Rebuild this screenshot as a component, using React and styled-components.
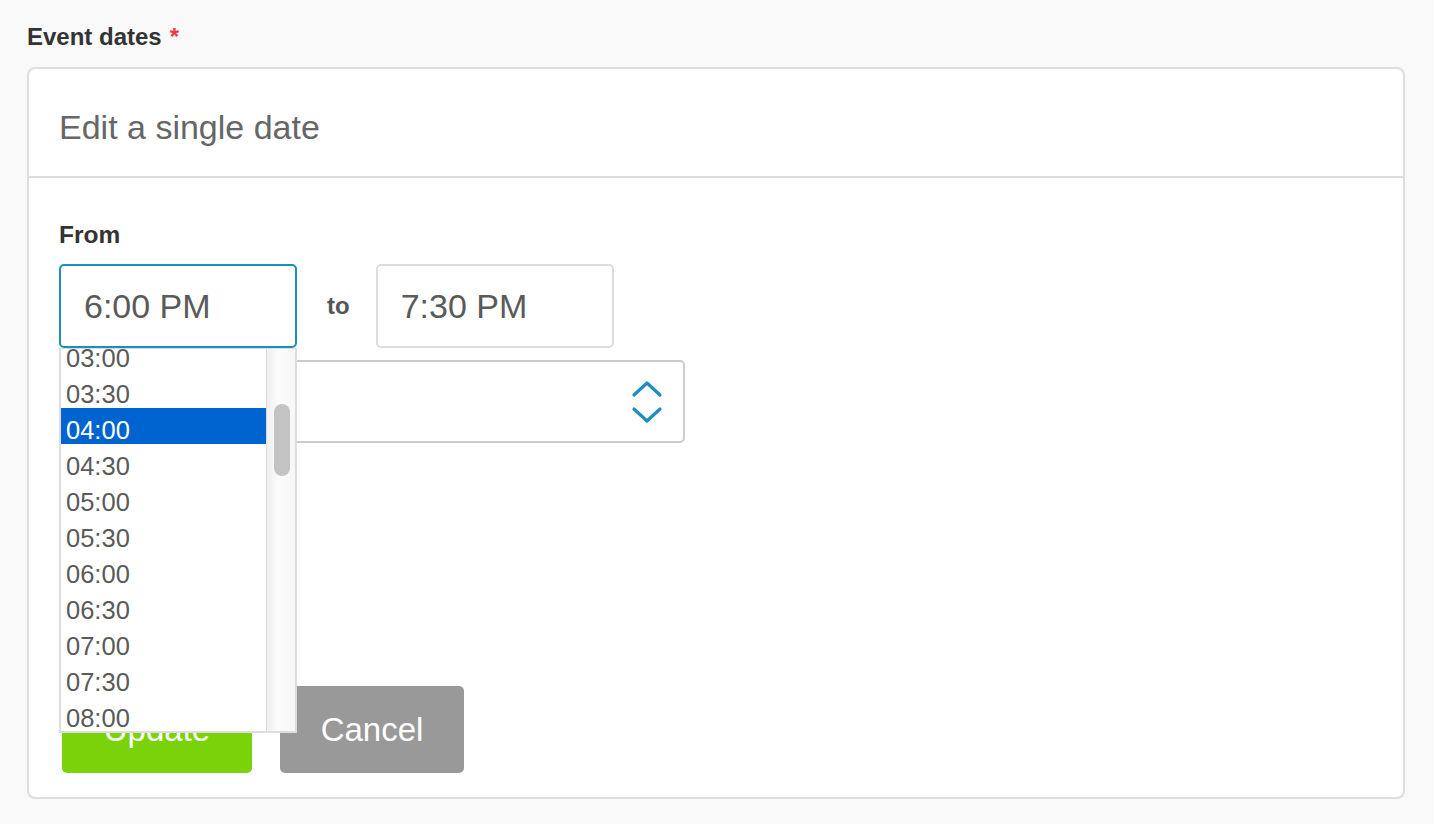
import React from "react";
import styled, { createGlobalStyle } from "styled-components";

const GlobalStyle = createGlobalStyle`
  html, body { margin: 0; padding: 0; background: #f9f9f9; }
  body { font-family: "Liberation Sans", Arial, Helvetica, sans-serif; }
  * { box-sizing: border-box; }
`;

const Page = styled.div`
  padding: 23px 29px 25px 27px;
  width: 1434px;
`;

const FieldLabel = styled.div`
  font-size: 24px;
  line-height: 28px;
  font-weight: bold;
  color: #333;
  margin-bottom: 16px;
`;

const Required = styled.span`
  color: #f0373a;
  margin-left: 8px;
  font-size: 24px;
`;

const Card = styled.div`
  background: #fff;
  border: 2px solid #dddddd;
  border-radius: 8px;
  width: 1378px;
`;

const CardHeader = styled.div`
  padding: 38px 30px 29px;
  font-size: 34px;
  line-height: 40px;
  color: #666;
  border-bottom: 2px solid #dddddd;
`;

const CardBody = styled.div`
  padding: 43px 30px 24px;
`;

const SubLabel = styled.div`
  font-size: 24.5px;
  line-height: 28px;
  font-weight: bold;
  color: #333;
  margin-bottom: 15px;
`;

const TimeRow = styled.div`
  display: flex;
  align-items: center;
`;

const FieldWrap = styled.div`
  position: relative;
`;

const TimeInput = styled.div`
  width: 238px;
  height: 84px;
  border: 2px solid ${(p) => (p.$focused ? "#1a8fbf" : "#dddddd")};
  border-radius: 5px;
  padding-left: 23px;
  display: flex;
  align-items: center;
  font-size: 34px;
  color: #5a5a5a;
  background: #fff;
`;

const ToText = styled.span`
  font-size: 24px;
  font-weight: bold;
  color: #555;
  margin: 0 26px 0 30px;
`;

const Dropdown = styled.div`
  position: absolute;
  top: 100%;
  left: 0;
  width: 238px;
  height: 385px;
  border: 2px solid #dddddd;
  border-top-width: 1px;
  background: #fff;
  display: flex;
  z-index: 5;
  overflow: hidden;
`;

const OptionList = styled.div`
  flex: 1;
  overflow: hidden;
  display: flex;
  flex-direction: column;
`;

const OptionScroller = styled.div`
  margin-top: -13px;
`;

const Option = styled.div`
  height: 36px;
  padding: 8px 0 0 5px;
  font-size: 25.5px;
  line-height: 28px;
  color: ${(p) => (p.$selected ? "#fff" : "#5a5a5a")};
  background: ${(p) => (p.$selected ? "#0064d0" : "transparent")};
`;

const ScrollTrack = styled.div`
  width: 29px;
  border-left: 1px solid #dcdcdc;
  background: linear-gradient(to right, #efefef, #fbfbfb 40%, #f7f7f7);
  padding: 55px 0 0 7px;
`;

const ScrollThumb = styled.div`
  width: 16px;
  height: 72px;
  border-radius: 8px;
  background: #c3c3c3;
`;

const SelectBox = styled.div`
  margin-top: 12px;
  width: 626px;
  height: 83px;
  border: 2px solid #cccccc;
  border-radius: 5px;
  display: flex;
  justify-content: flex-end;
  align-items: center;
  padding-right: 20px;
`;

const ButtonRow = styled.div`
  display: flex;
  gap: 28px;
  margin-top: 243px;
  padding-left: 3px;
`;

const Button = styled.button`
  height: 87px;
  width: ${(p) => p.$w}px;
  border: none;
  border-radius: 5px;
  background: ${(p) => p.$bg};
  color: #fff;
  font-family: "Liberation Sans", Arial, sans-serif;
  font-size: 33px;
  padding: 0;
  display: flex;
  align-items: center;
  justify-content: center;
`;

const times = [
  "03:00", "03:30", "04:00", "04:30", "05:00", "05:30",
  "06:00", "06:30", "07:00", "07:30", "08:00",
];

function Chevrons() {
  return (
    <svg width="32" height="44" viewBox="0 0 32 44" fill="none">
      <path d="M3 15 L16 3 L29 15" stroke="#1a8fbf" strokeWidth="3.2" strokeLinecap="round" strokeLinejoin="round" />
      <path d="M3 29 L16 41 L29 29" stroke="#1a8fbf" strokeWidth="3.2" strokeLinecap="round" strokeLinejoin="round" />
    </svg>
  );
}

export default function App() {
  return (
    <>
      <GlobalStyle />
      <Page>
        <FieldLabel>
          Event dates<Required>*</Required>
        </FieldLabel>
        <Card>
          <CardHeader>Edit a single date</CardHeader>
          <CardBody>
            <SubLabel>From</SubLabel>
            <TimeRow>
              <FieldWrap>
                <TimeInput $focused>6:00 PM</TimeInput>
                <Dropdown>
                  <OptionList>
                    <OptionScroller>
                      {times.map((t) => (
                        <Option key={t} $selected={t === "04:00"}>
                          {t}
                        </Option>
                      ))}
                    </OptionScroller>
                  </OptionList>
                  <ScrollTrack>
                    <ScrollThumb />
                  </ScrollTrack>
                </Dropdown>
              </FieldWrap>
              <ToText>to</ToText>
              <TimeInput>7:30 PM</TimeInput>
            </TimeRow>
            <SelectBox>
              <Chevrons />
            </SelectBox>
            <ButtonRow>
              <Button $w={190} $bg="#7ad20a">Update</Button>
              <Button $w={184} $bg="#999999">Cancel</Button>
            </ButtonRow>
          </CardBody>
        </Card>
      </Page>
    </>
  );
}
